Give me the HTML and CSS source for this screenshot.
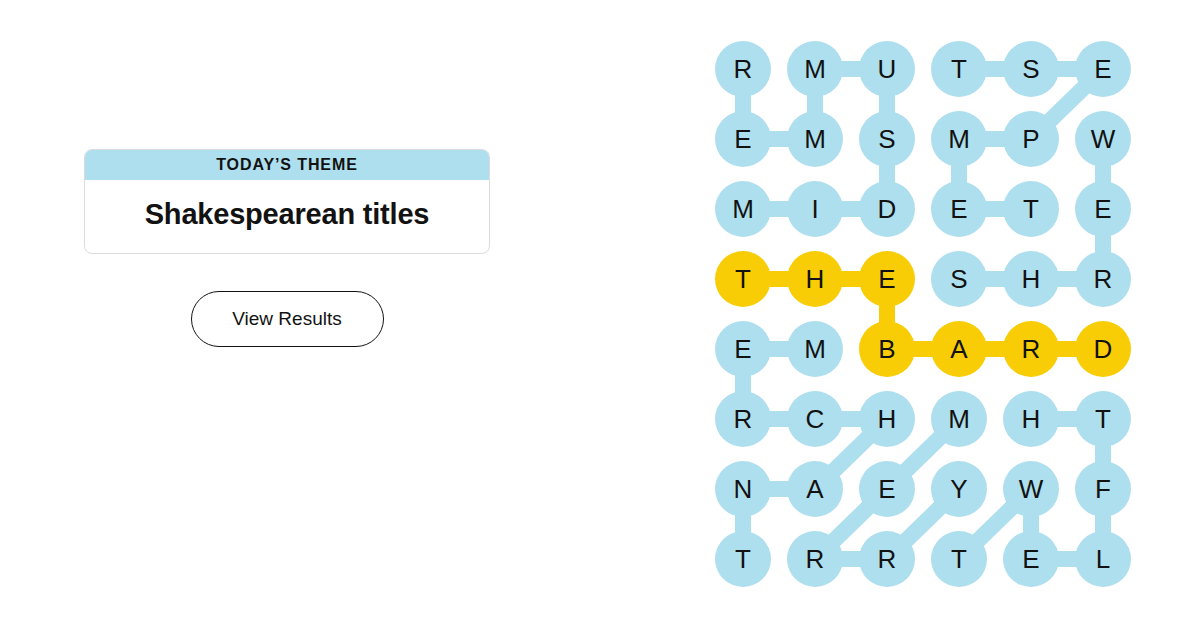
FILE: index.html
```html
<!DOCTYPE html>
<html lang="en">
<head>
<meta charset="utf-8">
<title>Strands</title>
<link rel="stylesheet" href="styles.css">
</head>
<body>
<main class="page">
  <section class="side">
    <div class="theme-card">
      <div class="theme-head">TODAY’S THEME</div>
      <div class="theme-body">Shakespearean titles</div>
    </div>
    <button class="results-btn" type="button">View Results</button>
  </section>

  <section class="board">
    <svg class="links" width="416" height="546" viewBox="0 0 416 546" aria-hidden="true">
      <g stroke="#aedfee" stroke-width="16" stroke-linecap="butt">
        <!-- MIDSUMMER -->
        <line x1="28" y1="168" x2="100" y2="168"/>
        <line x1="100" y1="168" x2="172" y2="168"/>
        <line x1="172" y1="168" x2="172" y2="98"/>
        <line x1="172" y1="98" x2="172" y2="28"/>
        <line x1="172" y1="28" x2="100" y2="28"/>
        <line x1="100" y1="28" x2="100" y2="98"/>
        <line x1="100" y1="98" x2="28" y2="98"/>
        <line x1="28" y1="98" x2="28" y2="28"/>
        <!-- TEMPEST -->
        <line x1="316" y1="168" x2="244" y2="168"/>
        <line x1="244" y1="168" x2="244" y2="98"/>
        <line x1="244" y1="98" x2="316" y2="98"/>
        <line x1="316" y1="98" x2="388" y2="28"/>
        <line x1="388" y1="28" x2="316" y2="28"/>
        <line x1="316" y1="28" x2="244" y2="28"/>
        <!-- SHREW -->
        <line x1="244" y1="238" x2="316" y2="238"/>
        <line x1="316" y1="238" x2="388" y2="238"/>
        <line x1="388" y1="238" x2="388" y2="168"/>
        <line x1="388" y1="168" x2="388" y2="98"/>
        <!-- MERCHANT -->
        <line x1="100" y1="308" x2="28" y2="308"/>
        <line x1="28" y1="308" x2="28" y2="378"/>
        <line x1="28" y1="378" x2="100" y2="378"/>
        <line x1="100" y1="378" x2="172" y2="378"/>
        <line x1="172" y1="378" x2="100" y2="448"/>
        <line x1="100" y1="448" x2="28" y2="448"/>
        <line x1="28" y1="448" x2="28" y2="518"/>
        <!-- MERRY -->
        <line x1="244" y1="378" x2="172" y2="448"/>
        <line x1="172" y1="448" x2="100" y2="518"/>
        <line x1="100" y1="518" x2="172" y2="518"/>
        <line x1="172" y1="518" x2="244" y2="448"/>
        <!-- TWELFTH -->
        <line x1="244" y1="518" x2="316" y2="448"/>
        <line x1="316" y1="448" x2="316" y2="518"/>
        <line x1="316" y1="518" x2="388" y2="518"/>
        <line x1="388" y1="518" x2="388" y2="448"/>
        <line x1="388" y1="448" x2="388" y2="378"/>
        <line x1="388" y1="378" x2="316" y2="378"/>
      </g>
      <g stroke="#f8cd05" stroke-width="16">
        <!-- THEBARD -->
        <line x1="28" y1="238" x2="100" y2="238"/>
        <line x1="100" y1="238" x2="172" y2="238"/>
        <line x1="172" y1="238" x2="172" y2="308"/>
        <line x1="172" y1="308" x2="244" y2="308"/>
        <line x1="244" y1="308" x2="316" y2="308"/>
        <line x1="316" y1="308" x2="388" y2="308"/>
      </g>
    </svg>
    <div class="grid">
      <span class="cell">R</span><span class="cell">M</span><span class="cell">U</span><span class="cell">T</span><span class="cell">S</span><span class="cell">E</span>
      <span class="cell">E</span><span class="cell">M</span><span class="cell">S</span><span class="cell">M</span><span class="cell">P</span><span class="cell">W</span>
      <span class="cell">M</span><span class="cell">I</span><span class="cell">D</span><span class="cell">E</span><span class="cell">T</span><span class="cell">E</span>
      <span class="cell gold">T</span><span class="cell gold">H</span><span class="cell gold">E</span><span class="cell">S</span><span class="cell">H</span><span class="cell">R</span>
      <span class="cell">E</span><span class="cell">M</span><span class="cell gold">B</span><span class="cell gold">A</span><span class="cell gold">R</span><span class="cell gold">D</span>
      <span class="cell">R</span><span class="cell">C</span><span class="cell">H</span><span class="cell">M</span><span class="cell">H</span><span class="cell">T</span>
      <span class="cell">N</span><span class="cell">A</span><span class="cell">E</span><span class="cell">Y</span><span class="cell">W</span><span class="cell">F</span>
      <span class="cell">T</span><span class="cell">R</span><span class="cell">R</span><span class="cell">T</span><span class="cell">E</span><span class="cell">L</span>
    </div>
  </section>
</main>
</body>
</html>
```

FILE: styles.css
```css
* { box-sizing: border-box; }

html, body {
  margin: 0;
  padding: 0;
  background: #ffffff;
}

body {
  width: 1200px;
  height: 640px;
  overflow: hidden;
  font-family: "Liberation Sans", Arial, sans-serif;
  color: #121212;
}

.page {
  display: flex;
  align-items: flex-start;
  padding: 41px 0 0 84px;
}

.side {
  width: 406px;
  margin-top: 108px;
  display: flex;
  flex-direction: column;
  align-items: center;
}

.theme-card {
  width: 100%;
  border: 1px solid #dcdcdc;
  border-radius: 8px;
  overflow: hidden;
  background: #fff;
}

.theme-head {
  height: 30px;
  background: #aedfee;
  display: flex;
  align-items: center;
  justify-content: center;
  font-size: 16px;
  font-weight: 700;
  letter-spacing: 0.9px;
  color: #121212;
}

.theme-body {
  height: 73px;
  display: flex;
  align-items: center;
  justify-content: center;
  font-size: 29px;
  font-weight: 700;
  letter-spacing: -0.2px;
  padding-bottom: 4px;
}

.results-btn {
  margin-top: 37px;
  width: 193px;
  height: 56px;
  border: 1px solid #121212;
  border-radius: 28px;
  background: #fff;
  font-family: "Liberation Sans", Arial, sans-serif;
  font-size: 19px;
  color: #121212;
  padding: 0;
  cursor: pointer;
}

.board {
  position: relative;
  margin-left: 225px;
  width: 416px;
  height: 546px;
}

.links {
  position: absolute;
  left: 0;
  top: 0;
}

.grid {
  position: relative;
  display: grid;
  grid-template-columns: repeat(6, 56px);
  grid-auto-rows: 56px;
  column-gap: 16px;
  row-gap: 14px;
}

.cell {
  width: 56px;
  height: 56px;
  border-radius: 50%;
  background: #aedfee;
  display: flex;
  align-items: center;
  justify-content: center;
  font-size: 26px;
  color: #121212;
}

.cell.gold {
  background: #f8cd05;
}
```
